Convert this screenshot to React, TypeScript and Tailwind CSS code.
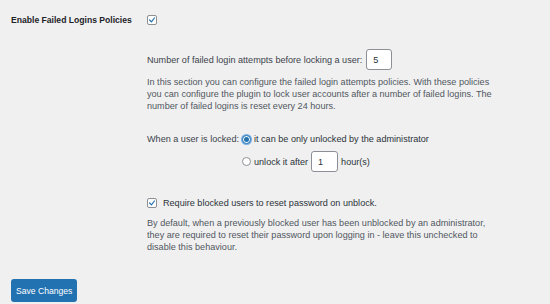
import React from "react";

function Checkbox() {
  return (
    <span className="inline-flex h-[10px] w-[10px] items-center justify-center rounded-[2px] border border-[#8c8f94] bg-white">
      <svg viewBox="0 0 20 20" className="h-[10px] w-[10px]">
        <path d="M4 10 L8.5 14.5 L16 5" fill="none" stroke="#2271b1" strokeWidth="3" strokeLinecap="round" strokeLinejoin="round" />
      </svg>
    </span>
  );
}

function Radio({ checked }: { checked?: boolean }) {
  return (
    <span
      className={
        checked
          ? "inline-flex h-[9px] w-[9px] items-center justify-center rounded-full border border-[#2271b1] bg-white shadow-[0_0_0_1px_#72aee6]"
          : "inline-flex h-[9px] w-[9px] items-center justify-center rounded-full border border-[#8c8f94] bg-white"
      }
    >
      {checked && <span className="h-[5px] w-[5px] rounded-full bg-[#2271b1]" />}
    </span>
  );
}

function NumInput({ value, w }: { value: string; w: string }) {
  return (
    <span className={`inline-flex h-[21px] items-center rounded-[3px] border border-[#8c8f94] bg-white pl-[6px] text-[#2c3338] ${w}`}>
      {value}
    </span>
  );
}

export default function App() {
  return (
    <div className="min-h-screen bg-[#f0f0f1] font-['Liberation_Sans',Arial,sans-serif] text-[9.1px] leading-[12px] text-[#3c434a]">
      <div className="flex pl-[11px] pt-[15px]">
        <div className="flex h-[10px] w-[136px] items-center text-[8.6px] font-bold text-[#1d2327]">
          Enable Failed Logins Policies
        </div>
        <div className="flex flex-col">
          <div className="flex h-[10px] items-center">
            <Checkbox />
          </div>

          <div className="mt-[24px] flex items-center gap-[4px]">
            <span>Number of failed login attempts before locking a user:</span>
            <NumInput value="5" w="w-[26px]" />
          </div>

          <p className="mt-[6px] w-[360px] text-[#50575e]">
            In this section you can configure the failed login attempts policies. With these policies
            <br />
            you can configure the plugin to lock user accounts after a number of failed logins. The
            <br />
            number of failed logins is reset every 24 hours.
          </p>

          <div className="mt-[21px] grid grid-cols-[auto_auto] justify-start gap-y-[6px]">
            <span className="flex h-[12px] items-center pr-[3px]">When a user is locked:</span>
            <span className="flex h-[12px] items-center gap-[3px] text-[#2c3338]">
              <Radio checked />
              <span>it can be only unlocked by the administrator</span>
            </span>
            <span />
            <span className="flex items-center gap-[3px] text-[#2c3338]">
              <Radio />
              <span>unlock it after</span>
              <NumInput value="1" w="w-[27px]" />
              <span>hour(s)</span>
            </span>
          </div>

          <div className="mt-[26px] flex h-[10px] items-center gap-[6px] text-[#2c3338]">
            <Checkbox />
            <span>Require blocked users to reset password on unblock.</span>
          </div>

          <p className="mt-[9px] w-[360px] text-[#50575e]">
            By default, when a previously blocked user has been unblocked by an administrator,
            <br />
            they are required to reset their password upon logging in - leave this unchecked to
            <br />
            disable this behaviour.
          </p>
        </div>
      </div>
      <div className="pl-[11px] pt-[26px]">
        <button className="flex h-[23px] items-center rounded-[3px] bg-[#2271b1] px-[5px] text-[8.6px] text-white">
          Save Changes
        </button>
      </div>
    </div>
  );
}
